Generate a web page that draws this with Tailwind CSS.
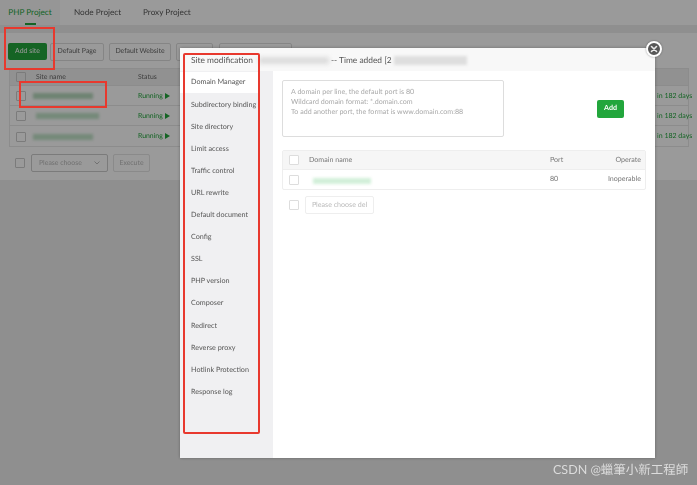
<!DOCTYPE html>
<html lang="en">
<head>
  <meta charset="UTF-8" />
  <title>Site modification</title>
  <script src="https://cdn.jsdelivr.net/npm/@tailwindcss/browser@4"></script>
</head>
<body class="bg-[#ebebeb] font-['Lato','Noto_Sans_CJK_TC',sans-serif] text-[#555] [text-rendering:geometricPrecision]">
  <div class="relative w-[697px] h-[485px] overflow-hidden opacity-[.99]">

    <!-- page behind the dialog -->
    <div class="flex h-[25px] bg-white text-[8.2px]">
      <div class="relative w-[60px] flex items-center justify-center text-[#20a53a] bg-[#f8f8f8]">
        PHP Project
        <span class="absolute bottom-0 left-[25px] w-[11px] h-[2px] bg-[#20a53a]"></span>
      </div>
      <div class="w-[69px] flex items-center pl-[14px]">Node Project</div>
      <div class="flex items-center pl-[14px]">Proxy Project</div>
    </div>

    <div class="mt-[8px] h-[147px] bg-white px-[8px] pt-[10px]">
      <div class="flex items-center h-[17px] gap-[4px] text-[6.9px] text-[#666]">
        <div class="w-[39px] h-[17px] mr-[-1px] flex items-center justify-center rounded-[2px] bg-[#20a53a] text-white">Add site</div>
        <div class="w-[54px] h-[18px] flex items-center justify-center rounded-[2px] border border-[#ddd]">Default Page</div>
        <div class="w-[62px] h-[18px] ml-[1px] flex items-center justify-center rounded-[2px] border border-[#ddd]">Default Website</div>
        <div class="w-[37px] h-[18px] ml-[1px] rounded-[2px] border border-[#ddd]"></div>
        <div class="w-[73px] h-[18px] ml-[2px] rounded-[2px] border border-[#ddd]"></div>
      </div>

      <div class="mt-[8px] ml-px border border-[#e8e8e8] text-[6.9px] text-[#666]">
        <div class="flex items-center h-[17px] bg-[#f0f0f0] border-b border-[#e8e8e8]">
          <span class="ml-[6px] w-[10px] h-[10px] border border-[#ccc] rounded-[1px]"></span>
          <span class="ml-[10px] w-[102px]">Site name</span>
          <span>Status</span>
        </div>
        <div class="flex items-center h-[20px] pt-[1px] border-b border-[#e8e8e8]">
          <span class="ml-[6px] w-[10px] h-[10px] border border-[#ccc] rounded-[1px]"></span>
          <span class="ml-[7px] w-[105px]"><span class="block w-[60px] h-[6px] bg-[#b5d8bc] blur-[1.5px]"></span></span>
          <span class="flex items-center gap-[2px] text-[#20a53a]">Running
            <svg class="w-[5px] h-[6px]" viewBox="0 0 5 6"><path d="M0 0L5 3L0 6Z" fill="#20a53a"/></svg>
          </span>
        </div>
        <div class="flex items-center h-[20px] pt-[1px] border-b border-[#e8e8e8]">
          <span class="ml-[6px] w-[10px] h-[10px] border border-[#ccc] rounded-[1px]"></span>
          <span class="ml-[10px] w-[102px]"><span class="block w-[63px] h-[6px] bg-[#c0e2c7] blur-[1.5px]"></span></span>
          <span class="flex items-center gap-[2px] text-[#20a53a]">Running
            <svg class="w-[5px] h-[6px]" viewBox="0 0 5 6"><path d="M0 0L5 3L0 6Z" fill="#20a53a"/></svg>
          </span>
        </div>
        <div class="flex items-center h-[20px] pt-[1px]">
          <span class="ml-[6px] w-[10px] h-[10px] border border-[#ccc] rounded-[1px]"></span>
          <span class="ml-[7px] w-[105px]"><span class="block w-[60px] h-[6px] bg-[#c0e2c7] blur-[1.5px]"></span></span>
          <span class="flex items-center gap-[2px] text-[#20a53a]">Running
            <svg class="w-[5px] h-[6px]" viewBox="0 0 5 6"><path d="M0 0L5 3L0 6Z" fill="#20a53a"/></svg>
          </span>
        </div>
      </div>

      <div class="mt-[7px] flex items-center text-[6.9px] text-[#bbb]">
        <span class="ml-[7px] w-[10px] h-[10px] border border-[#ccc] rounded-[1px]"></span>
        <div class="ml-[6px] w-[77px] h-[18px] flex items-center justify-between px-[7px] border border-[#ccc] rounded-[2px]">
          Please choose
          <svg class="w-[6px] h-[4px]" viewBox="0 0 6 4"><path d="M0.5 0.5L3 3L5.5 0.5" fill="none" stroke="#bbb"/></svg>
        </div>
        <div class="ml-[5px] w-[37px] h-[18px] flex items-center justify-center border border-[#e4e4e4] rounded-[2px]">Execute</div>
      </div>
    </div>

    <!-- expiry column, only this part shows on the right of the dialog -->
    <div class="absolute left-[657px] top-[92px] flex flex-col gap-[12px] text-[7px] leading-[8px] whitespace-nowrap text-[#20a53a]">
      <span>in 182 days</span>
      <span>in 182 days</span>
      <span>in 182 days</span>
    </div>

    <div class="absolute inset-0 bg-black/40"></div>

    <!-- dialog -->
    <div class="absolute left-[180px] top-[48px] w-[475px] h-[410px] flex flex-col bg-white shadow-[0_0_3px_rgba(0,0,0,0.3)]">
      <div class="flex items-center h-[23px] shrink-0 pl-[11px] pt-[1px] bg-[#f8f8f8] text-[8.4px] text-[#555]">
        Site modification
        <span class="ml-[6px] w-[70px] h-[7px] bg-[#dcdcdc] blur-[2px]"></span>
        <span class="ml-[2px]">-- Time added [2</span>
        <span class="ml-[2px] w-[73px] h-[9px] bg-[#dedede] blur-[1.5px]"></span>
      </div>

      <div class="flex flex-1 min-h-0">
        <div class="w-[93px] shrink-0 pt-[1px] bg-[#f0f0f2] text-[7.2px] text-[#555]">
          <div class="h-[21px] w-[80px] flex items-center pl-[11px] bg-white">Domain Manager</div>
          <div class="h-[22.1px] mt-[1px] flex items-center pl-[11px] whitespace-nowrap">Subdirectory binding</div>
          <div class="h-[22.1px] flex items-center pl-[11px]">Site directory</div>
          <div class="h-[22.1px] flex items-center pl-[11px]">Limit access</div>
          <div class="h-[22.1px] flex items-center pl-[11px]">Traffic control</div>
          <div class="h-[22.1px] flex items-center pl-[11px]">URL rewrite</div>
          <div class="h-[22.1px] flex items-center pl-[11px]">Default document</div>
          <div class="h-[22.1px] flex items-center pl-[11px]">Config</div>
          <div class="h-[22.1px] flex items-center pl-[11px]">SSL</div>
          <div class="h-[22.1px] flex items-center pl-[11px]">PHP version</div>
          <div class="h-[22.1px] flex items-center pl-[11px]">Composer</div>
          <div class="h-[22.1px] flex items-center pl-[11px]">Redirect</div>
          <div class="h-[22.1px] flex items-center pl-[11px]">Reverse proxy</div>
          <div class="h-[22.1px] flex items-center pl-[11px]">Hotlink Protection</div>
          <div class="h-[22.1px] flex items-center pl-[11px]">Response log</div>
        </div>

        <div class="flex-1 pl-[9px] pr-[9px] pt-[9px] text-[7.1px]">
          <div class="flex items-center">
            <div class="w-[222px] h-[57px] px-[8px] pt-[6px] border border-[#ddd] rounded-[2px] text-[#aaa] leading-[10px]">
              <p>A domain per line, the default port is 80</p>
              <p>Wildcard domain format: *.domain.com</p>
              <p>To add another port, the format is www.domain.com:88</p>
            </div>
            <div class="ml-[93px] w-[27px] h-[18px] flex items-center justify-center rounded-[2px] bg-[#20a53a] text-white font-bold">Add</div>
          </div>

          <div class="mt-[13px] w-[364px] border border-[#eee] rounded-[2px] text-[#777]">
            <div class="flex items-center h-[19px] bg-[#f6f6f6] border-b border-[#eee] pl-[6px] pr-[4px]">
              <span class="w-[10px] h-[10px] border border-[#ddd] bg-white rounded-[1px]"></span>
              <span class="ml-[10px] w-[241px]">Domain name</span>
              <span class="w-[30px]">Port</span>
              <span class="flex-1 text-right">Operate</span>
            </div>
            <div class="flex items-center h-[19px] pl-[6px] pr-[4px]">
              <span class="w-[10px] h-[10px] border border-[#ddd] rounded-[1px]"></span>
              <span class="ml-[14px] w-[237px]"><span class="block w-[58px] h-[6px] mt-[3px] bg-[#d2efd9] blur-[1.5px]"></span></span>
              <span class="w-[30px]">80</span>
              <span class="flex-1 text-right">Inoperable</span>
            </div>
          </div>

          <div class="mt-[6px] flex items-center text-[#bbb]">
            <span class="ml-[7px] w-[10px] h-[10px] border border-[#ddd] rounded-[1px]"></span>
            <div class="ml-[6px] w-[69px] h-[18px] flex items-center justify-center border border-[#eee] rounded-[2px]">Please choose del</div>
          </div>
        </div>
      </div>
    </div>

    <!-- close button -->
    <div class="absolute left-[646px] top-[41px] w-[16px] h-[16px] flex items-center justify-center rounded-full bg-[#555] border-2 border-white shadow-[0_0_2px_rgba(0,0,0,0.4)]">
      <svg class="w-[8px] h-[8px]" viewBox="0 0 8 8"><path d="M1.5 1.5L6.5 6.5M6.5 1.5L1.5 6.5" stroke="#e8e8e8" stroke-width="1.6" stroke-linecap="round"/></svg>
    </div>

    <!-- red marks drawn on the screenshot -->
    <div class="absolute left-[4px] top-[27px] w-[51px] h-[43px] border-2 border-[#e8372c]"></div>
    <div class="absolute left-[19px] top-[81px] w-[88px] h-[27px] border-2 border-[#e8372c]"></div>
    <div class="absolute left-[183px] top-[53px] w-[77px] h-[381px] border-2 border-[#e8372c] rounded-[2px]"></div>

    <div class="absolute left-[553px] top-[461px] text-[12.5px] leading-[18px] whitespace-nowrap text-[#dcdcdc]">CSDN @蠟筆小新工程師</div>
  </div>
</body>
</html>
